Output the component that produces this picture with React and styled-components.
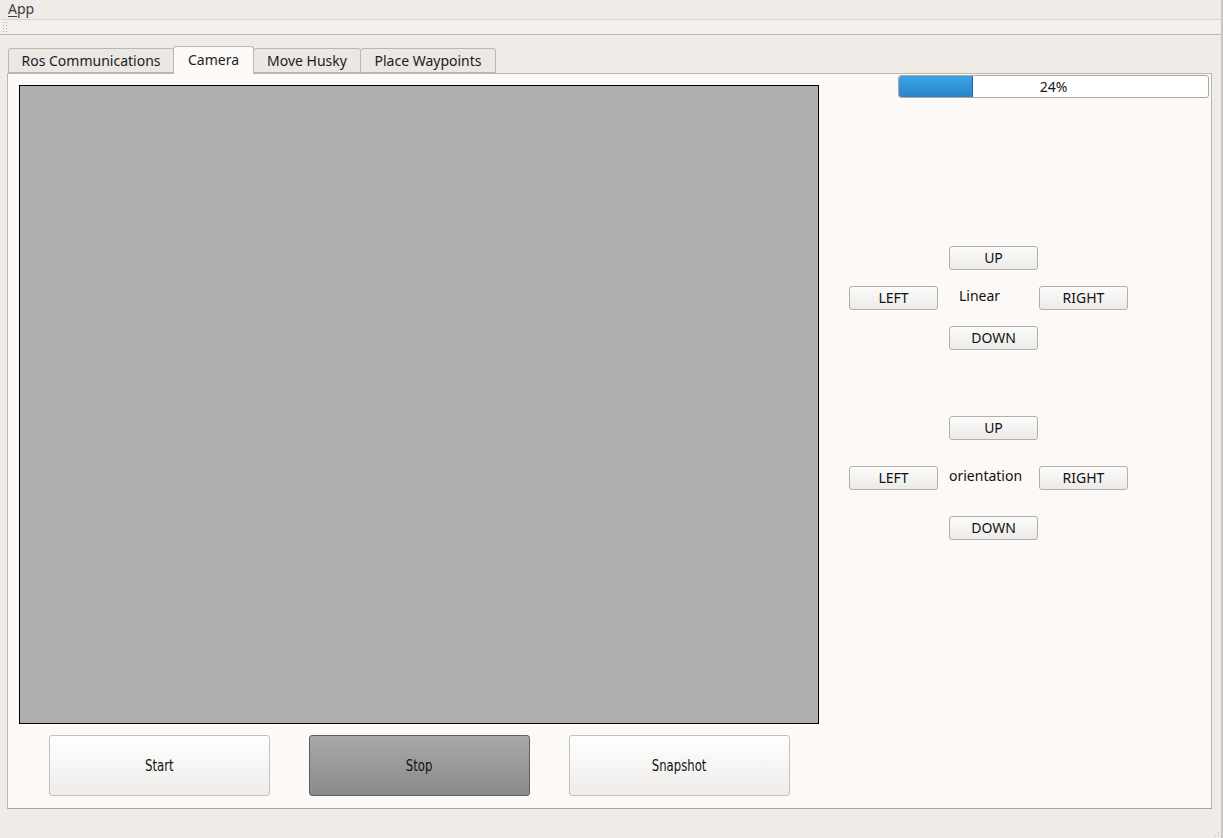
import styled, { createGlobalStyle } from "styled-components";

const GlobalStyle = createGlobalStyle`
  html, body {
    margin: 0;
    padding: 0;
    background: #efebe7;
  }
  body {
    font-family: "Noto Sans", "DejaVu Sans", sans-serif;
    font-size: 13px;
    color: #1a1a1a;
  }
`;

const tabs = [
    { label: "Ros Communications", width: 166 },
    { label: "Camera", width: 81, active: true },
    { label: "Move Husky", width: 108 },
    { label: "Place Waypoints", width: 136 },
];

const progress = 24;

function Pad({ label, rowGap, labelPad }) {
    return (
        <PadGrid $rowGap={rowGap}>
            <PadButton style={{ gridColumn: 2, gridRow: 1 }}>UP</PadButton>
            <PadButton style={{ gridColumn: 1, gridRow: 2 }}>LEFT</PadButton>
            <PadLabel $pad={labelPad} style={{ gridColumn: 2, gridRow: 2 }}>{label}</PadLabel>
            <PadButton style={{ gridColumn: 3, gridRow: 2 }}>RIGHT</PadButton>
            <PadButton style={{ gridColumn: 2, gridRow: 3 }}>DOWN</PadButton>
        </PadGrid>
    );
}

export default function App() {
    return (
        <Window>
            <GlobalStyle />
            <MenuBar>
                <MenuItem><u>A</u>pp</MenuItem>
            </MenuBar>
            <ToolBar>
                <Handle />
            </ToolBar>

            <TabWidget>
                <TabBar>
                    {tabs.map((t) => (
                        <Tab key={t.label} $active={t.active} $w={t.width}>
                            {t.label}
                        </Tab>
                    ))}
                </TabBar>

                <Pane>
                    <LeftColumn>
                        <CameraView />
                        <ActionRow>
                            <ActionButton><span>Start</span></ActionButton>
                            <ActionButton $pressed><span>Stop</span></ActionButton>
                            <ActionButton><span>Snapshot</span></ActionButton>
                        </ActionRow>
                    </LeftColumn>

                    <RightColumn>
                        <Progress>
                            <Chunk style={{ width: `${progress}%` }} />
                            <ProgressText>{progress}%</ProgressText>
                        </Progress>
                        <Controls>
                            <Pad label="Linear" rowGap={16} labelPad={10} />
                            <Pad label="orientation" rowGap={26} labelPad={0} />
                        </Controls>
                    </RightColumn>
                </Pane>
            </TabWidget>

            <StatusArea>
                <Grip />
            </StatusArea>
        </Window>
    );
}

/* styled-components */

const Window = styled.div`
  width: 1221px;
  height: 838px;
  border-right: 2px solid #c9c5c1;
  display: flex;
  flex-direction: column;
  background: #efebe7;
  overflow: hidden;
`;

const MenuBar = styled.div`
  height: 19px;
  display: flex;
  align-items: center;
  padding-left: 8px;
  background: #efebe7;
`;

const MenuItem = styled.span`
  font-size: 14px;
  color: #3c3c3c;
  line-height: 19px;
  margin-top: -2px;

  u {
    text-decoration-thickness: 1px;
    text-underline-offset: 2px;
  }
`;

const ToolBar = styled.div`
  height: 14px;
  border-top: 1px solid #d8d4d0;
  border-bottom: 1px solid #bdb9b5;
  background: #f3f0ec;
  display: flex;
  align-items: center;
  padding-left: 2px;
`;

const Handle = styled.div`
  width: 5px;
  height: 12px;
  background-image: radial-gradient(circle, #b3afab 0.7px, transparent 0.8px);
  background-size: 3px 3px;
`;

const TabWidget = styled.div`
  margin: 11px 9px 0 7px;
  display: flex;
  flex-direction: column;
`;

const TabBar = styled.div`
  height: 28px;
  display: flex;
  align-items: flex-end;
  padding-left: 1px;
  margin-bottom: -1px;
  position: relative;
  z-index: 1;
`;

const Tab = styled.div`
  box-sizing: border-box;
  width: ${(p) => p.$w}px;
  height: ${(p) => (p.$active ? 28 : 25)}px;
  margin-bottom: ${(p) => (p.$active ? 0 : 1)}px;
  margin-right: -1px;
  padding-bottom: ${(p) => (p.$active ? 2 : 0)}px;
  display: flex;
  align-items: center;
  justify-content: center;
  border: 1px solid #bab6b2;
  border-bottom: ${(p) => (p.$active ? "none" : "1px solid #bab6b2")};
  border-radius: 3px 3px 0 0;
  background: ${(p) => (p.$active ? "#fdf9f6" : "#ebe7e3")};
  position: relative;
  z-index: ${(p) => (p.$active ? 2 : 1)};
  font-size: 14px;
  color: #1c1c1c;
  white-space: nowrap;
`;

const Pane = styled.div`
  box-sizing: border-box;
  height: 736px;
  border: 1px solid #bab6b2;
  border-bottom-color: #a9a5a1;
  background: #fdf9f6;
  padding: 1px 2px 12px 11px;
  display: flex;
`;

const LeftColumn = styled.div`
  width: 800px;
  flex-shrink: 0;
  padding-top: 10px;
  display: flex;
  flex-direction: column;
  gap: 11px;
`;

const CameraView = styled.div`
  box-sizing: border-box;
  width: 800px;
  height: 639px;
  border: 1px solid #000;
  background: #afafaf;
`;

const ActionRow = styled.div`
  display: flex;
  gap: 39px;
  padding-left: 30px;
`;

const ActionButton = styled.button`
  box-sizing: border-box;
  flex-shrink: 0;
  width: 221px;
  height: 61px;
  border-radius: 3px;
  border: 1px solid ${(p) => (p.$pressed ? "#5e5e5e" : "#c2c0be")};
  background: ${(p) =>
        p.$pressed
            ? "linear-gradient(180deg, #a9a9a9, #8a8a8a)"
            : "linear-gradient(180deg, #fefefe, #efedeb)"};
  color: #111;
  font-family: "DejaVu Sans", sans-serif;
  font-size: 15px;
  display: flex;
  align-items: center;
  justify-content: center;
  padding: 0;

  span {
    display: inline-block;
    transform: scaleX(0.78);
  }
`;

const RightColumn = styled.div`
  flex: 1;
  display: flex;
  flex-direction: column;
  padding-left: 30px;
`;

const Progress = styled.div`
  align-self: flex-end;
  box-sizing: border-box;
  width: 311px;
  height: 23px;
  position: relative;
  border: 1px solid #aaa7a4;
  border-radius: 3px;
  background: #ffffff;
  overflow: hidden;
`;

const Chunk = styled.div`
  position: absolute;
  left: 0;
  top: 0;
  bottom: 0;
  box-sizing: border-box;
  background: linear-gradient(180deg, #3aa3e6, #2a85cb);
  border-right: 1px solid #1f6aa8;
  border-radius: 2px 0 0 2px;
`;

const ProgressText = styled.div`
  position: relative;
  line-height: 21px;
  text-align: center;
  font-size: 14px;
  color: #1a1a1a;
`;

const Controls = styled.div`
  margin-top: 148px;
  display: flex;
  flex-direction: column;
  gap: 66px;
`;

const PadGrid = styled.div`
  display: grid;
  grid-template-columns: 100px 90px 89px;
  grid-auto-rows: 24px;
  row-gap: ${(p) => p.$rowGap}px;
  align-items: center;
`;

const PadButton = styled.button`
  box-sizing: border-box;
  width: 89px;
  height: 24px;
  padding: 0;
  border: 1px solid #b3afab;
  border-radius: 3px;
  background: linear-gradient(180deg, #fbfbfa, #ecebea);
  font-family: "Noto Sans", sans-serif;
  font-size: 14px;
  color: #111;
  line-height: 22px;
`;

const PadLabel = styled.span`
  padding-left: ${(p) => p.$pad}px;
  font-size: 14px;
  color: #111;
  margin-top: -5px;
  white-space: nowrap;
`;

const StatusArea = styled.div`
  flex: 1;
  display: flex;
  justify-content: flex-end;
  align-items: flex-end;
`;

const Grip = styled.div`
  width: 10px;
  height: 10px;
  background-image: radial-gradient(circle, #bcb8b4 0.7px, transparent 0.8px);
  background-size: 3px 3px;
  clip-path: polygon(100% 0, 100% 100%, 0 100%);
`;
